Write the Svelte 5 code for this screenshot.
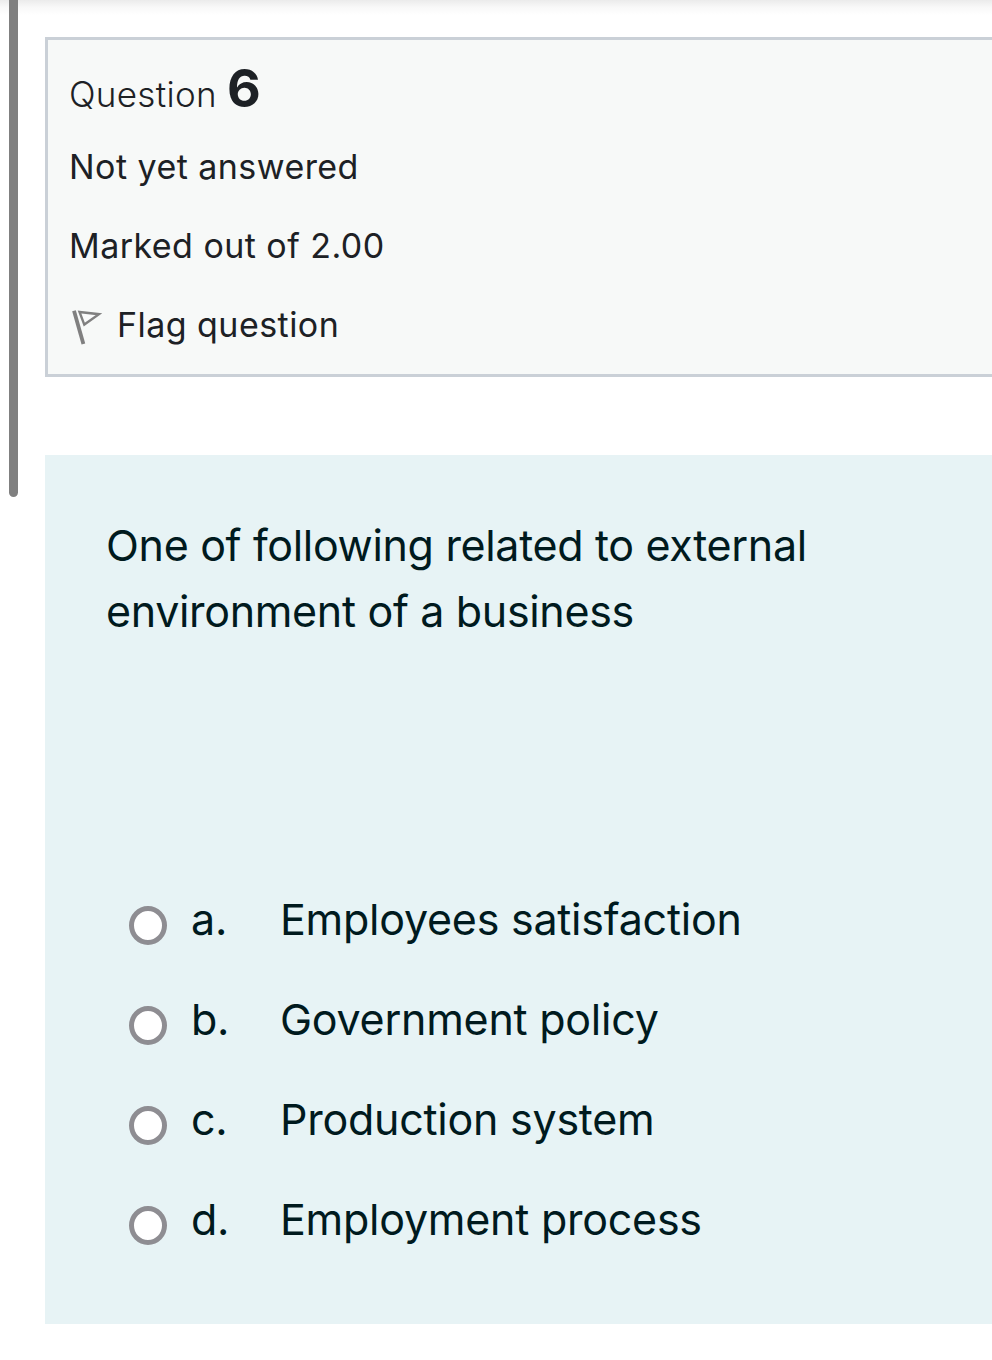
<script>
    let selected = $state('');

    const number = 6;
    const options = [
        { letter: 'a', text: 'Employees satisfaction' },
        { letter: 'b', text: 'Government policy' },
        { letter: 'c', text: 'Production system' },
        { letter: 'd', text: 'Employment process' }
    ];
</script>

<div class="page">
    <div class="scrollbar"></div>
    <main>
        <section class="info">
            <h3>Question <span class="number">{number}</span></h3>
            <div class="row">Not yet answered</div>
            <div class="row">Marked out of 2.00</div>
            <div class="row flag">
                <svg width="34" height="36" viewBox="0 0 34 36">
                    <path d="M5 .8 L14.4 34" fill="none" stroke="#808080" stroke-width="3.8" />
                    <path d="M10.5 2 L30 4.2 L15.3 14.6 Z" fill="#fafbfb" stroke="#808080" stroke-width="2.4" />
                </svg>
                <span>Flag question</span>
            </div>
        </section>

        <section class="question">
            <p>One of following related to external<br />environment of a business</p>
            <div class="answers">
                {#each options as option}
                    <label>
                        <input type="radio" name="answer" value={option.letter} bind:group={selected} />
                        <span class="letter">{option.letter}.</span>
                        <span>{option.text}</span>
                    </label>
                {/each}
            </div>
        </section>
    </main>
</div>

<style>
    :global(body) {
        background: white;
        overflow: hidden;
    }

    .page {
        display: flex;
        height: 1360px;
        box-sizing: border-box;
        padding-left: 9px;
        background: linear-gradient(#ebebeb, #f8f8f8 7px, #ffffff 15px);
        font-family: Inter, "Liberation Sans", sans-serif;
        overflow: hidden;
    }

    .scrollbar {
        width: 9px;
        height: 497px;
        margin-right: 27px;
        border-radius: 0 0 5px 5px;
        background: #808080;
    }

    main {
        flex: 1;
        padding-top: 37px;
    }

    .info {
        box-sizing: border-box;
        height: 340px;
        padding: 23px 0 0 21px;
        border: 3px solid #cad0d7;
        border-right: none;
        background: #f7f9f8;
        color: #1d2125;
        font-size: 34px;
        letter-spacing: 0.45px;
    }

    h3 {
        margin: 0 0 15px;
        font-size: 35px;
        font-weight: 300;
        letter-spacing: 0.3px;
        line-height: 62px;
    }

    .number {
        font-size: 52px;
        font-weight: 700;
        line-height: 1;
    }

    .row {
        height: 53px;
        margin-bottom: 26px;
        line-height: 53px;
    }

    .flag {
        display: flex;
        align-items: center;
    }

    .flag svg {
        margin: 7px 14px 0 0;
    }

    .question {
        box-sizing: border-box;
        height: 869px;
        margin-top: 78px;
        padding: 57px 0 0 61px;
        background: #e7f3f5;
        color: #001a1e;
        font-size: 43px;
        letter-spacing: -0.33px;
        line-height: 66px;
    }

    p {
        margin: 0;
    }

    .answers {
        display: flex;
        flex-direction: column;
        gap: 34px;
        margin-top: 242px;
        padding-left: 23px;
        letter-spacing: -0.25px;
    }

    label {
        display: flex;
        align-items: center;
        height: 66px;
    }

    input {
        appearance: none;
        box-sizing: border-box;
        width: 38px;
        height: 39px;
        margin: 12px 24px 0 0;
        border: 5px solid #8e8d92;
        border-radius: 50%;
        background: white;
    }

    input:checked {
        background: radial-gradient(#0075ff 50%, white 54%);
    }

    .letter {
        width: 89px;
    }
</style>
